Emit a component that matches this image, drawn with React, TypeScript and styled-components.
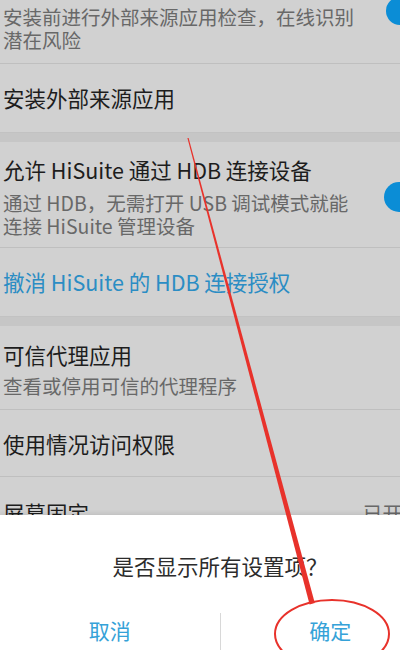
import React from "react";
import styled, { createGlobalStyle } from "styled-components";

const GlobalStyle = createGlobalStyle`
  html, body {
    margin: 0;
    padding: 0;
    background: #d1d1d1;
  }
`;

const Screen = styled.div`
  position: relative;
  width: 400px;
  height: 650px;
  overflow: hidden;
  background: #d1d1d1;
  font-family: "Noto Sans CJK SC", "Noto Sans", sans-serif;
`;

const Phone = styled.div`
  width: 440px;
  height: 650px;
  display: flex;
  flex-direction: column;
`;

const List = styled.div`
  flex: 1;
  min-height: 0;
  overflow: hidden;
`;

const Row = styled.div<{ $pt: number; $pb: number; $last?: boolean }>`
  display: flex;
  align-items: center;
  padding: ${(p) => p.$pt}px 26px ${(p) => p.$pb}px 3px;
  border-bottom: ${(p) => (p.$last ? "none" : "1px solid #bfbfbf")};
`;

const TextCol = styled.div`
  flex: 1;
  min-width: 0;
`;

const Title = styled.div<{ $link?: boolean }>`
  font-size: 21.5px;
  line-height: 28px;
  color: ${(p) => (p.$link ? "#2b8dc4" : "#1d1d1d")};
  white-space: nowrap;
`;

const Sub = styled.div<{ $mt?: number }>`
  margin-top: ${(p) => p.$mt ?? 0}px;
  font-size: 19.5px;
  line-height: 23px;
  color: #686868;
`;

const Value = styled.div`
  margin-right: 12px;
  font-size: 19.5px;
  line-height: 28px;
  color: #686868;
`;

const Thumb = styled.span<{ $top?: number; $size: number }>`
  flex-shrink: 0;
  align-self: ${(p) => (p.$top !== undefined ? "flex-start" : "center")};
  margin-top: ${(p) => p.$top ?? 0}px;
  width: ${(p) => p.$size}px;
  height: ${(p) => p.$size}px;
  border-radius: 50%;
  background: #0b8dd6;
`;

const Band = styled.div`
  height: 9px;
  background: #c6c6c6;
  border-top: 1px solid #c2c2c2;
`;

const Dialog = styled.div`
  flex-shrink: 0;
  height: 135px;
  background: #ffffff;
  box-shadow: 0 -2px 4px rgba(0, 0, 0, 0.08);
  display: flex;
  flex-direction: column;
`;

const DialogTitle = styled.div`
  padding-top: 37px;
  text-align: center;
  font-size: 21.5px;
  line-height: 28px;
  color: #2c2c2c;
`;

const ButtonRow = styled.div`
  margin-top: 29px;
  height: 46px;
  display: grid;
  grid-template-columns: 1fr 1px 1fr;
`;

const DialogButton = styled.button`
  border: none;
  background: none;
  padding: 0;
  font-family: inherit;
  font-size: 21px;
  line-height: 28px;
  color: #35a2d8;
`;

const VSep = styled.div`
  margin: 4px 0 0;
  background: #d8d8d8;
`;

const Annotation = styled.svg`
  position: absolute;
  left: 0;
  top: 0;
  pointer-events: none;
`;

export default function App() {
  return (
    <Screen>
      <GlobalStyle />
      <Phone>
        <List>
          <Row $pt={5} $pb={12}>
            <TextCol>
              <Sub>安装前进行外部来源应用检查，在线识别</Sub>
              <Sub>潜在风险</Sub>
            </TextCol>
            <Thumb $size={28} $top={-8} />
          </Row>
          <Row $pt={20} $pb={20} $last>
            <TextCol>
              <Title>安装外部来源应用</Title>
            </TextCol>
          </Row>
          <Band />
          <Row $pt={14} $pb={10}>
            <TextCol>
              <Title>允许 HiSuite 通过 HDB 连接设备</Title>
              <Sub $mt={7}>通过 HDB，无需打开 USB 调试模式就能</Sub>
              <Sub>连接 HiSuite 管理设备</Sub>
            </TextCol>
            <Thumb $size={30} />
          </Row>
          <Row $pt={20} $pb={20} $last>
            <TextCol>
              <Title $link>撤消 HiSuite 的 HDB 连接授权</Title>
            </TextCol>
          </Row>
          <Band />
          <Row $pt={15} $pb={12}>
            <TextCol>
              <Title>可信代理应用</Title>
              <Sub $mt={5}>查看或停用可信的代理程序</Sub>
            </TextCol>
          </Row>
          <Row $pt={20} $pb={18}>
            <TextCol>
              <Title>使用情况访问权限</Title>
            </TextCol>
          </Row>
          <Row $pt={22} $pb={16} $last>
            <TextCol>
              <Title>屏幕固定</Title>
            </TextCol>
            <Value>已开</Value>
          </Row>
        </List>
        <Dialog>
          <DialogTitle>是否显示所有设置项？</DialogTitle>
          <ButtonRow>
            <DialogButton>取消</DialogButton>
            <VSep />
            <DialogButton>确定</DialogButton>
          </ButtonRow>
        </Dialog>
      </Phone>
      <Annotation width="400" height="650" viewBox="0 0 400 650">
        <polygon points="187.4,138 188.6,138 314.8,603 309.6,604.5" fill="#e8322b" />
        <ellipse cx="332" cy="634" rx="57" ry="34" fill="none" stroke="#e8322b" strokeWidth="2" />
      </Annotation>
    </Screen>
  );
}
